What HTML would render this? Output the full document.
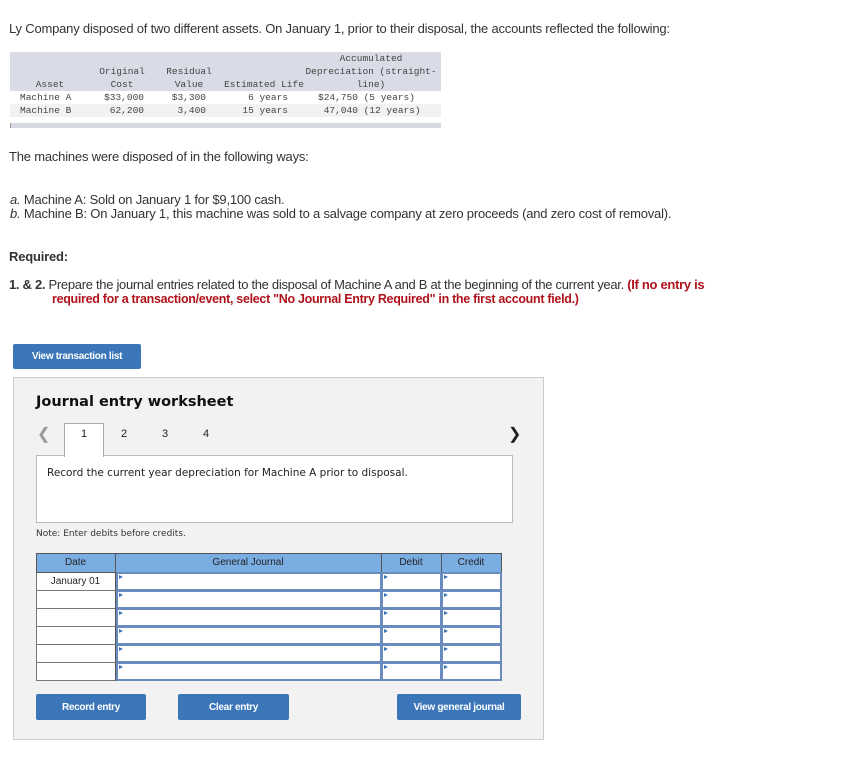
<!DOCTYPE html>
<html><head><style>
*{margin:0;padding:0;box-sizing:border-box}
body{width:860px;height:778px;background:#fff;font-family:"Liberation Sans",sans-serif;color:#333;position:relative;overflow:hidden}
.a{position:absolute;white-space:nowrap}
.t{font-size:13px;color:#333;letter-spacing:-0.2px}
.m{font-family:"Liberation Mono",monospace;font-size:9.5px;color:#444;text-align:center;line-height:13px}
.btn{position:absolute;background:#3a76b8;color:#fff;font-size:10px;font-weight:bold;display:flex;align-items:center;justify-content:center;border-radius:2px;letter-spacing:-0.3px}
.cell{position:absolute;background:#fff;border:2px solid #6a8bbd;border-top-width:2px}
.cell:before{content:"";position:absolute;left:1px;top:1px;border-left:4px solid #3a76b8;border-top:2px solid transparent;border-bottom:2px solid transparent}
</style></head><body>
<div class="a t" style="left:9px;top:21px">Ly Company disposed of two different assets. On January 1, prior to their disposal, the accounts reflected the following:</div>

<div class="a" style="left:10px;top:52px;width:431px;height:39px;background:#d9dce6"></div>
<div class="a" style="left:10px;top:104px;width:431px;height:13px;background:#f2f2f2"></div>
<div class="a" style="left:10px;top:123px;width:431px;height:5px;background:#d6d9e1;border-left:1px solid #999"></div>
<div class="a m" style="left:28px;top:78px;width:44px">Asset</div>
<div class="a m" style="left:96px;top:65px;width:52px">Original<br>Cost</div>
<div class="a m" style="left:163px;top:65px;width:52px">Residual<br>Value</div>
<div class="a m" style="left:222px;top:78px;width:84px">Estimated Life</div>
<div class="a m" style="left:305px;top:52px;width:132px">Accumulated<br>Depreciation (straight-<br>line)</div>
<div class="a m" style="left:20px;top:91px;width:56px;text-align:left">Machine A<br>Machine B</div>
<div class="a m" style="left:98px;top:91px;width:46px;text-align:right">$33,000<br>62,200</div>
<div class="a m" style="left:168px;top:91px;width:38px;text-align:right">$3,300<br>3,400</div>
<div class="a m" style="left:236px;top:91px;width:52px;text-align:right">6 years<br>15 years</div>
<div class="a m" style="left:318px;top:91px;width:106px;text-align:left">$24,750 (5 years)<br>&nbsp;47,040 (12 years)</div>

<div class="a t" style="left:9px;top:149px">The machines were disposed of in the following ways:</div>
<div class="a t" style="left:10px;top:192px"><i>a.</i> Machine A: Sold on January 1 for $9,100 cash.</div>
<div class="a t" style="left:10px;top:206px"><i>b.</i> Machine B: On January 1, this machine was sold to a salvage company at zero proceeds (and zero cost of removal).</div>
<div class="a t" style="left:9px;top:249px;font-weight:bold">Required:</div>
<div class="a t" style="left:9px;top:277px;letter-spacing:-0.3px"><b>1. &amp; 2.</b> Prepare the journal entries related to the disposal of Machine A and B at the beginning of the current year. <b style="color:#b0121b">(If no entry is</b></div>
<div class="a t" style="left:52px;top:292px;font-weight:bold;color:#b0121b;font-size:12.5px;letter-spacing:-0.3px">required for a transaction/event, select "No Journal Entry Required" in the first account field.)</div>

<div class="btn" style="left:13px;top:344px;width:128px;height:25px">View transaction list</div>

<div class="a" style="left:13px;top:377px;width:531px;height:363px;background:#f2f2f2;border:1px solid #ccc"></div>
<div class="a" style="left:36px;top:394px;font-size:14.5px;font-weight:bold;color:#111;font-family:'DejaVu Sans',sans-serif">Journal entry worksheet</div>
<div class="a" style="left:37px;top:424px;font-size:16px;color:#999">&#10094;</div>
<div class="a" style="left:508px;top:424px;font-size:16px;color:#222">&#10095;</div>
<div class="a" style="left:36px;top:455px;width:477px;height:68px;background:#fff;border:1px solid #bbb"></div>
<div class="a" style="left:64px;top:423px;width:40px;height:34px;background:#fff;border:1px solid #aaa;border-bottom:none"></div>
<div class="a" style="left:81px;top:428px;font-size:11px;color:#222">1</div>
<div class="a" style="left:121px;top:428px;font-size:11px;color:#222">2</div>
<div class="a" style="left:162px;top:428px;font-size:11px;color:#222">3</div>
<div class="a" style="left:203px;top:428px;font-size:11px;color:#222">4</div>
<div class="a" style="left:47px;top:467px;font-size:10.5px;color:#222;font-family:'DejaVu Sans',sans-serif">Record the current year depreciation for Machine A prior to disposal.</div>
<div class="a" style="left:36px;top:529px;font-size:9px;color:#333;font-family:'DejaVu Sans',sans-serif">Note: Enter debits before credits.</div>

<div class="a" style="left:36px;top:553px;width:466px;height:128px;background:#fff;border:1px solid #777"></div>
<div class="a" style="left:36px;top:553px;width:466px;height:20px;background:#7aaee3;border:1px solid #555"></div>
<div class="a" style="left:115px;top:553px;width:1px;height:128px;background:#555"></div>
<div class="a" style="left:381px;top:553px;width:1px;height:20px;background:#555"></div>
<div class="a" style="left:441px;top:553px;width:1px;height:20px;background:#555"></div>
<div class="a" style="left:36px;top:557px;width:79px;text-align:center;font-size:10px;color:#222">Date</div>
<div class="a" style="left:115px;top:557px;width:266px;text-align:center;font-size:10px;color:#222">General Journal</div>
<div class="a" style="left:381px;top:557px;width:60px;text-align:center;font-size:10px;color:#222">Debit</div>
<div class="a" style="left:441px;top:557px;width:60px;text-align:center;font-size:10px;color:#222">Credit</div>
<div class="a" style="left:36px;top:576px;width:79px;text-align:center;font-size:10px;color:#222">January 01</div>
<div class="a" style="left:36px;top:590px;width:79px;height:1px;background:#777"></div>
<div class="a" style="left:36px;top:608px;width:79px;height:1px;background:#777"></div>
<div class="a" style="left:36px;top:626px;width:79px;height:1px;background:#777"></div>
<div class="a" style="left:36px;top:644px;width:79px;height:1px;background:#777"></div>
<div class="a" style="left:36px;top:662px;width:79px;height:1px;background:#777"></div>

<div class="cell" style="left:116px;top:572px;width:266px;height:19px"></div><div class="cell" style="left:381px;top:572px;width:61px;height:19px"></div><div class="cell" style="left:441px;top:572px;width:61px;height:19px"></div>
<div class="cell" style="left:116px;top:590px;width:266px;height:19px"></div><div class="cell" style="left:381px;top:590px;width:61px;height:19px"></div><div class="cell" style="left:441px;top:590px;width:61px;height:19px"></div>
<div class="cell" style="left:116px;top:608px;width:266px;height:19px"></div><div class="cell" style="left:381px;top:608px;width:61px;height:19px"></div><div class="cell" style="left:441px;top:608px;width:61px;height:19px"></div>
<div class="cell" style="left:116px;top:626px;width:266px;height:19px"></div><div class="cell" style="left:381px;top:626px;width:61px;height:19px"></div><div class="cell" style="left:441px;top:626px;width:61px;height:19px"></div>
<div class="cell" style="left:116px;top:644px;width:266px;height:19px"></div><div class="cell" style="left:381px;top:644px;width:61px;height:19px"></div><div class="cell" style="left:441px;top:644px;width:61px;height:19px"></div>
<div class="cell" style="left:116px;top:662px;width:266px;height:19px"></div><div class="cell" style="left:381px;top:662px;width:61px;height:19px"></div><div class="cell" style="left:441px;top:662px;width:61px;height:19px"></div>

<div class="btn" style="left:36px;top:694px;width:110px;height:26px">Record entry</div>
<div class="btn" style="left:178px;top:694px;width:111px;height:26px">Clear entry</div>
<div class="btn" style="left:397px;top:694px;width:124px;height:26px">View general journal</div>
</body></html>
